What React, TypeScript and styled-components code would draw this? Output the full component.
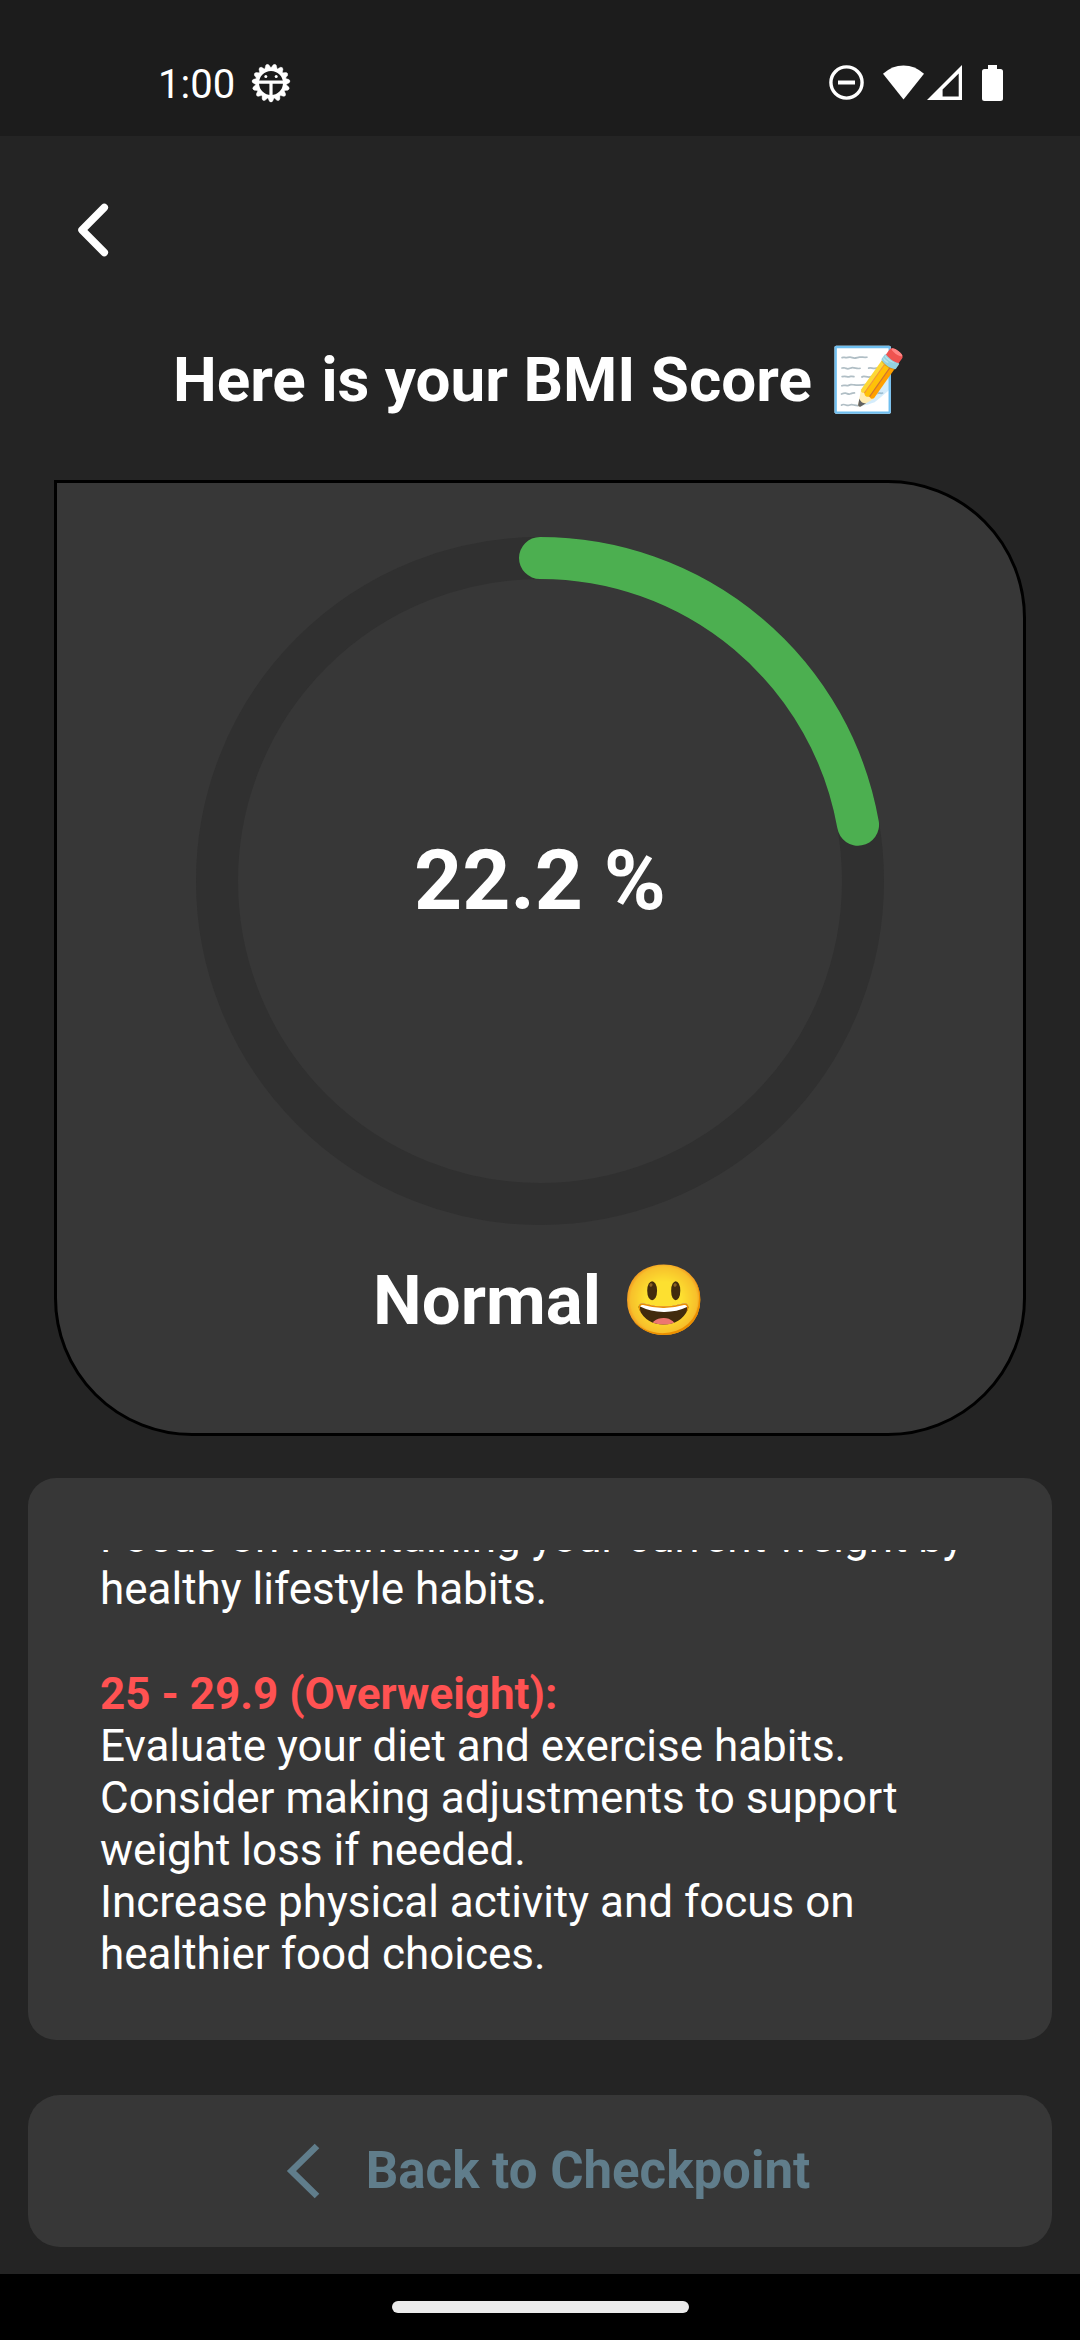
import React from "react";
import styled, { createGlobalStyle } from "styled-components";

const GlobalStyle = createGlobalStyle`
  *, *::before, *::after { box-sizing: border-box; }
  body {
    margin: 0;
    background: #242424;
    color: #ffffff;
    font-family: Roboto, "Liberation Sans", "Noto Color Emoji", sans-serif;
  }
  svg { display: block; flex: none; }
`;

const Page = styled.div`
  display: flex;
  flex-direction: column;
  min-height: 100vh;
`;

const StatusBar = styled.header`
  display: flex;
  align-items: center;
  justify-content: space-between;
  height: 136px;
  padding: 30px 76px 0 158px;
  background: #1c1c1c;
`;

const StatusGroup = styled.div`
  display: flex;
  align-items: center;
`;

const Clock = styled.time`
  margin-right: 16px;
  padding-top: 3px;
  font-size: 40px;
  line-height: 48px;
`;

const Main = styled.main`
  display: flex;
  flex: 1;
  flex-direction: column;
  padding: 54px 28px 27px;
`;

const BackButton = styled.button`
  display: flex;
  align-self: flex-start;
  margin-left: 38px;
  padding: 0;
  border: 0;
  background: none;
  color: inherit;
  cursor: pointer;
`;

const Title = styled.h1`
  display: flex;
  align-items: center;
  justify-content: center;
  gap: 18px;
  margin: 74px 0 64px;
  font-size: 62px;
  font-weight: 700;
  line-height: 72px;
`;

const ScoreCard = styled.section`
  display: flex;
  flex-direction: column;
  align-items: center;
  margin: 0 26px;
  padding: 54px 0 92px;
  border: 3px solid #000000;
  border-radius: 0 138px 138px 138px;
  background: #373737;
`;

const Gauge = styled.div`
  display: grid;
  place-items: center;
  > * { grid-area: 1 / 1; }
`;

const Score = styled.output`
  font-size: 84px;
  font-weight: 700;
  line-height: 98px;
`;

const Verdict = styled.h2`
  display: flex;
  align-items: center;
  gap: 20px;
  margin: 36px 0 0;
  font-size: 69px;
  font-weight: 700;
  line-height: 80px;
`;

const AdviceCard = styled.section`
  margin: 42px 0 55px;
  padding: 72px 72px 60px;
  border-radius: 28px;
  background: #373737;
`;

const AdviceScroll = styled.div`
  display: flex;
  flex-direction: column-reverse;
  gap: 53px;
  height: 430px;
  overflow-y: auto;
  scrollbar-width: none;
`;

const Advice = styled.article`
  font-size: 44px;
  line-height: 52px;
`;

const AdviceHeading = styled.h3`
  margin: 0;
  color: #ff5252;
  font-size: inherit;
  font-weight: 700;
`;

const AdviceText = styled.p`
  margin: 0;
`;

const CheckpointButton = styled.button`
  display: flex;
  align-items: center;
  justify-content: center;
  gap: 46px;
  height: 152px;
  padding: 0 0 0 16px;
  border: 0;
  border-radius: 32px;
  background: #373737;
  color: #607d8b;
  font: 700 51px/60px Roboto, "Liberation Sans", sans-serif;
  cursor: pointer;
`;

const NavigationBar = styled.footer`
  display: flex;
  align-items: center;
  justify-content: center;
  height: 66px;
  background: #000000;
`;

const HomeHandle = styled.div`
  width: 297px;
  height: 12px;
  border-radius: 6px;
  background: #ebebeb;
`;

const TEETH = Array.from({ length: 15 }, (_, i) => 90 + i * 24);

function GearFaceIcon() {
  return (
    <svg width="40" height="40" viewBox="-20 -20 40 40" fill="none" stroke="#fff" aria-hidden="true">
      {TEETH.map((a) => (
        <path key={a} d="M13 -4 L18.2 -1.6 Q20 0 18.2 1.6 L13 4 Z" fill="#fff" strokeWidth="0.4" transform={`rotate(${a})`} />
      ))}
      <circle r="13.6" strokeWidth="3.2" />
      <path d="M-13 -0.8 H13 M0 -0.8 V14" strokeWidth="3.2" />
      <circle cx="-5.2" cy="-6.5" r="1.5" fill="#fff" stroke="none" />
      <circle cx="5.2" cy="-6.5" r="1.5" fill="#fff" stroke="none" />
    </svg>
  );
}

function StatusIcons() {
  return (
    <svg width="176" height="38" viewBox="828 64 176 38" fill="#fff" aria-hidden="true">
      <circle cx="846.5" cy="82.5" r="15.6" fill="none" stroke="#fff" strokeWidth="3.4" />
      <path d="M838 80.5h17v4h-17z" />
      <path d="M883 73.8Q892 65.4 903.5 65.4Q915 65.4 924 73.8L903.5 99.5Z" />
      <path fillRule="evenodd" d="M962 65V100H927ZM958.7 73.5L942.6 89.6V96.6H958.7Z" />
      <path d="M988 65h9v4h3.5q2.5 0 2.5 2.5v27q0 2.500-2.5 2.500h-16q-2.500 0-2.500-2.500v-27q0-2.500 2.500-2.500h3.500z" />
    </svg>
  );
}

const RADIUS = 323;
const LENGTH = 2 * Math.PI * RADIUS;

function Ring({ percent }: { percent: number }) {
  return (
    <svg width="688" height="688" viewBox="-344 -344 688 688" fill="none" strokeWidth="42" aria-hidden="true">
      <circle r={RADIUS} stroke="#303030" />
      <circle
        r={RADIUS}
        stroke="#4caf50"
        strokeLinecap="round"
        strokeDasharray={`${(LENGTH * percent) / 100} ${LENGTH}`}
        transform="rotate(-90)"
      />
    </svg>
  );
}

export default function App() {
  return (
    <>
      <GlobalStyle />
      <Page>
        <StatusBar>
          <StatusGroup>
            <Clock>1:00</Clock>
            <GearFaceIcon />
          </StatusGroup>
          <StatusIcons />
        </StatusBar>
        <Main>
          <BackButton aria-label="Back">
            <svg width="56" height="80" viewBox="66 190 56 80" fill="none" stroke="#fff" strokeWidth="7.5" strokeLinecap="round" strokeLinejoin="round" aria-hidden="true">
              <path d="M104.3 207.5L82 230L104.3 252.5" />
            </svg>
          </BackButton>
          <Title>
            <span>Here is your BMI Score</span>
            <span>📝</span>
          </Title>
          <ScoreCard>
            <Gauge>
              <Ring percent={22.2} />
              <Score>22.2 %</Score>
            </Gauge>
            <Verdict>
              <span>Normal</span>
              <span>😃</span>
            </Verdict>
          </ScoreCard>
          <AdviceCard>
            <AdviceScroll>
              <Advice>
                <AdviceHeading>25 - 29.9 (Overweight):</AdviceHeading>
                <AdviceText>Evaluate your diet and exercise habits.</AdviceText>
                <AdviceText>Consider making adjustments to support weight loss if needed.</AdviceText>
                <AdviceText>Increase physical activity and focus on healthier food choices.</AdviceText>
              </Advice>
              <Advice>
                <AdviceText>Focus on maintaining your current weight by healthy lifestyle habits.</AdviceText>
              </Advice>
            </AdviceScroll>
          </AdviceCard>
          <CheckpointButton>
            <svg width="34" height="56" viewBox="286 2143 34 56" fill="none" stroke="currentColor" strokeWidth="6.5" aria-hidden="true">
              <path d="M317 2146L291.5 2171L317 2196" />
            </svg>
            Back to Checkpoint
          </CheckpointButton>
        </Main>
        <NavigationBar>
          <HomeHandle />
        </NavigationBar>
      </Page>
    </>
  );
}
